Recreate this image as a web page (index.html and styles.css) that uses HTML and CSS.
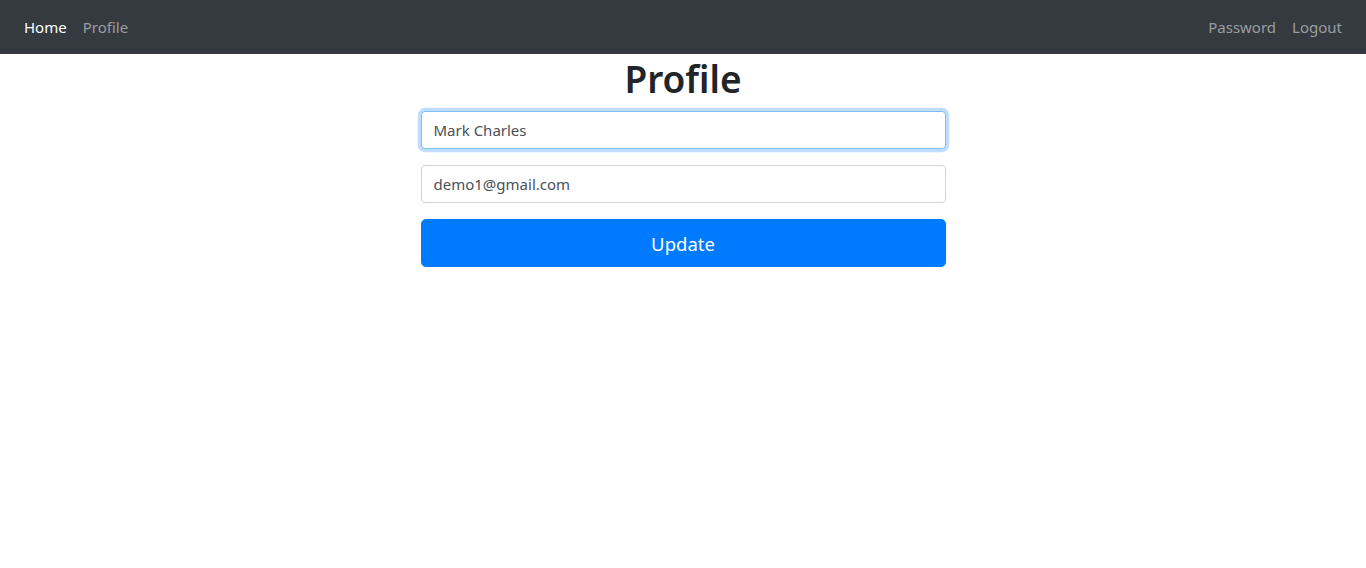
FILE: index.html
```
<!DOCTYPE html>
<html lang="en">
<head>
<meta charset="utf-8">
<title>Profile</title>
<link rel="stylesheet" href="styles.css">
</head>
<body>
<nav class="navbar">
  <div class="nav-left">
    <a class="nav-link active" href="#">Home</a>
    <a class="nav-link" href="#">Profile</a>
  </div>
  <div class="nav-right">
    <a class="nav-link" href="#">Password</a>
    <a class="nav-link" href="#">Logout</a>
  </div>
</nav>
<main class="content">
  <h1 class="title">Profile</h1>
  <form class="form">
    <input class="input focused" type="text" value="Mark Charles">
    <input class="input" type="email" value="demo1@gmail.com">
    <button class="btn" type="button">Update</button>
  </form>
</main>
</body>
</html>
```
FILE: styles.css
```
* { box-sizing: border-box; }
body {
  margin: 0;
  font-family: "Noto Sans", "Open Sans", sans-serif;
  font-size: 15px;
  color: #212529;
  background: #fff;
}
.navbar {
  height: 54px;
  background: #343a40;
  display: flex;
  justify-content: space-between;
  align-items: center;
  padding: 0 16px;
}
.nav-left, .nav-right { display: flex; }
.nav-link {
  padding: 8px 8px;
  color: rgba(255,255,255,.5);
  text-decoration: none;
  font-size: 15px;
  line-height: 24px;
}
.nav-link.active { color: #fff; }
.content {
  width: 525px;
  margin: 0 auto;
}
.title {
  margin: 0 0 8px;
  padding-top: 1px;
  text-align: center;
  font-size: 37px;
  font-weight: 600;
  line-height: 48px;
}
.form { display: flex; flex-direction: column; gap: 16px; }
.input {
  display: block;
  width: 100%;
  height: 38px;
  padding: 6px 12px;
  font-family: inherit;
  font-size: 15px;
  color: #495057;
  border: 1px solid #ced4da;
  border-radius: 4px;
  background: #fff;
  outline: none;
}
.input.focused {
  border-color: #80bdff;
  box-shadow: 0 0 0 3.2px rgba(0,123,255,.25);
}
.btn {
  display: block;
  width: 100%;
  height: 48px;
  border: 1px solid #007bff;
  background: #007bff;
  color: #fff;
  font-family: inherit;
  font-size: 18.5px;
  border-radius: 4.8px;
  cursor: pointer;
}
```
